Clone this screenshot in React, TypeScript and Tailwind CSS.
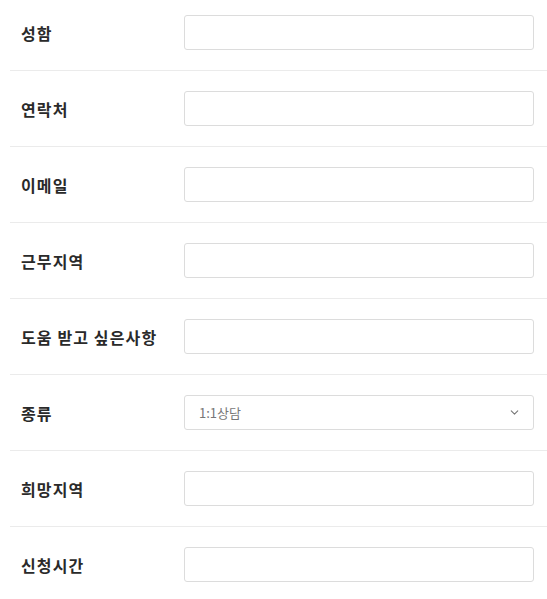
import { ChevronDown } from "lucide-react";

const FIELDS = ["성함", "연락처", "이메일", "근무지역", "도움 받고 싶은사항", "종류", "희망지역", "신청시간"];

function Field({ label, first, last }: { label: string; first: boolean; last: boolean }) {
  return (
    <div
      className={`flex items-center pl-[11px] ${first ? "pt-[15px]" : "pt-5"} pb-5 ${
        last ? "" : "border-b border-[#ebebeb]"
      }`}
    >
      <label className="w-[163px] shrink-0 text-[16px] leading-[20px] font-bold tracking-[0.07em] text-[#2a2a2a]">{label}</label>
      {label === "종류" ? (
        <div className="flex h-[35px] w-[350px] items-center justify-between rounded-[3px] border border-[#dcdcdc] bg-white pl-[14px] pr-[12px] text-[13px] text-[#777]">
          <span>1:1상담</span>
          <ChevronDown size={13} strokeWidth={2} className="text-[#777]" />
        </div>
      ) : (
        <input
          type="text"
          className="h-[35px] w-[350px] rounded-[3px] border border-[#dcdcdc] bg-white px-3 text-[13px] outline-none"
        />
      )}
    </div>
  );
}

export default function App() {
  return (
    <div
      className="h-[599px] overflow-hidden bg-white pl-[10px]"
      style={{ fontFamily: '"Noto Sans CJK KR", "Noto Sans", sans-serif' }}
    >
      {FIELDS.map((f, i) => (
        <Field key={f} label={f} first={i === 0} last={i === FIELDS.length - 1} />
      ))}
    </div>
  );
}
